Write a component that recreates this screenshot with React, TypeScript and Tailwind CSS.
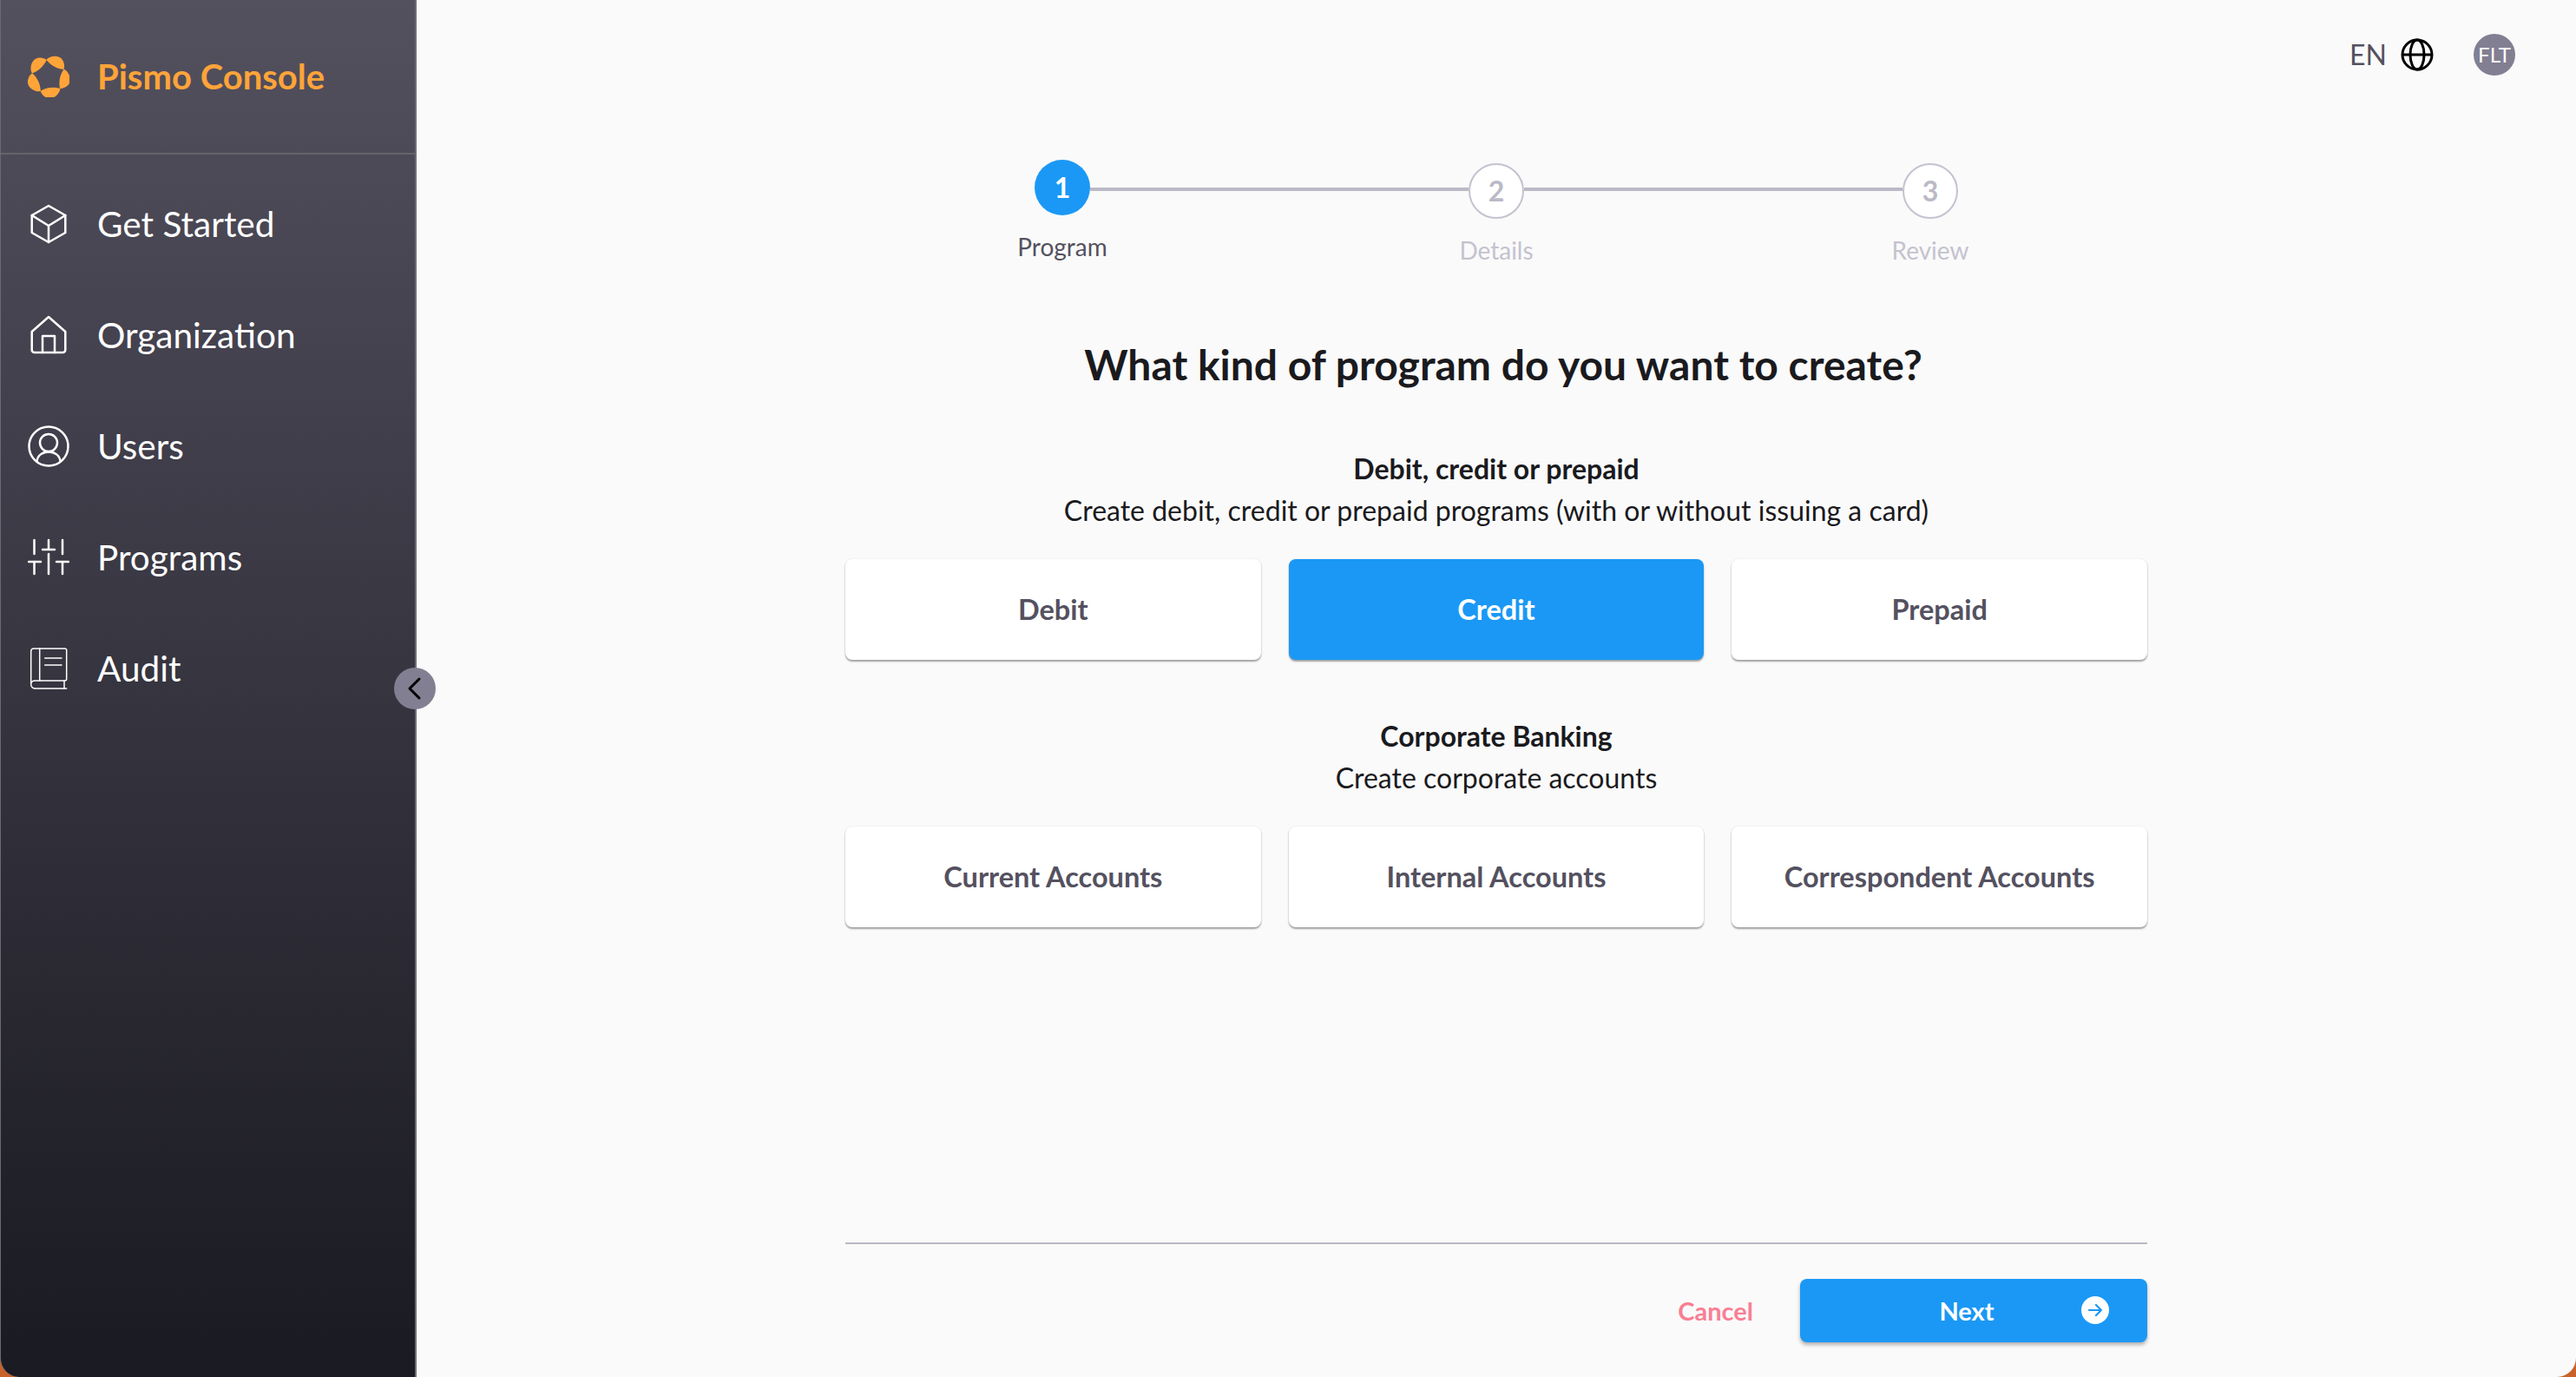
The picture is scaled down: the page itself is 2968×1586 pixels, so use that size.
const navItems = [
  { label: "Get Started", icon: <CubeIcon /> },
  { label: "Organization", icon: <HouseIcon /> },
  { label: "Users", icon: <UserIcon /> },
  { label: "Programs", icon: <SlidersIcon /> },
  { label: "Audit", icon: <BookIcon /> },
];

const steps = [
  { n: "1", label: "Program" },
  { n: "2", label: "Details" },
  { n: "3", label: "Review" },
];

function PismoLogo() {
  return (
    <svg width="48" height="48" viewBox="-24 -24 48 48" fill="#ffa439">
      {[0, 72, 144, 216, 288].map((deg) => (
        <path
          key={deg}
          transform={`rotate(${deg})`}
          d="M-2.7 -19.3C2 -24 12 -25 16 -19C18.5 -15 18.5 -11 17.3 -8C10 -9 3 -12 -2.7 -19.3Z"
        />
      ))}
    </svg>
  );
}

function CubeIcon() {
  return (
    <svg width="48" height="48" viewBox="0 0 48 48" fill="none" stroke="white" strokeWidth="2.5" strokeLinejoin="round" strokeLinecap="round">
      <path d="M24 3L43.3 14V34L24 45L4.7 34V14Z" />
      <path d="M4.7 14L24 26L43.3 14M24 26V45" />
    </svg>
  );
}

function HouseIcon() {
  return (
    <svg width="48" height="48" viewBox="0 0 48 48" fill="none" stroke="white" strokeWidth="2.5" strokeLinejoin="round" strokeLinecap="round">
      <path d="M4.7 20L24 3L43.3 20V41a3 3 0 0 1-3 3H7.7a3 3 0 0 1-3-3Z" />
      <path d="M17 44V25H31V44" />
    </svg>
  );
}

function UserIcon() {
  return (
    <svg width="48" height="48" viewBox="0 0 48 48" fill="none" stroke="white" strokeWidth="2.5" strokeLinecap="round">
      <circle cx="24" cy="24" r="22.5" />
      <circle cx="24" cy="20" r="10" />
      <path d="M10.5 41.5C11 34.5 17 30.5 24 30.5S37 34.5 37.5 41.5" />
    </svg>
  );
}

function SlidersIcon() {
  return (
    <svg width="48" height="48" viewBox="0 0 48 48" fill="none" stroke="white" strokeWidth="2.5" strokeLinecap="round">
      <path d="M7.5 4V20M1 29H15M7.5 29V43" />
      <path d="M24 4V15M17 15H31M24 20V43" />
      <path d="M40 4V20M33 29H47M40 29V43" />
    </svg>
  );
}

function BookIcon() {
  return (
    <svg width="48" height="48" viewBox="0 0 48 48" fill="none" stroke="white" strokeWidth="1.5" strokeLinecap="round" strokeLinejoin="round">
      <path d="M3.7 42V4a3 3 0 0 1 3-3H42.7a2 2 0 0 1 2 2V36a2 2 0 0 1-2 2H8a4.3 4.3 0 0 0-4.3 4.3a4.7 4.7 0 0 0 4.3 4.7H44.7" />
      <path d="M13.7 1V38M42 38V47" />
      <path d="M19.7 12H39M19.7 20H39" />
    </svg>
  );
}

function Sidebar() {
  return (
    <aside className="relative w-[480px] shrink-0 rounded-bl-[22px] border-l border-r-2 border-l-[#6b6975] border-r-[#6e6c7a] bg-gradient-to-b from-[#54515f] to-[#1a1a22]">
      {/* Logo */}
      <div className="flex h-[178px] items-center gap-[32px] border-b-2 border-[#64636a] pl-[31px]">
        <PismoLogo />
        <span className="text-[40px] font-bold text-[#ffa439]">Pismo Console</span>
      </div>

      {/* Nav */}
      <nav className="flex flex-col pt-4">
        {navItems.map((item) => (
          <a key={item.label} href="#" className="flex h-[128px] items-center gap-[32px] pl-[31px] text-[40.5px] text-white">
            {item.icon}
            {item.label}
          </a>
        ))}
      </nav>

      {/* Collapse */}
      <button className="absolute left-[453px] top-[769px] flex h-12 w-12 items-center justify-center rounded-full bg-[#827f92]">
        <svg width="24" height="28" viewBox="0 0 24 28" fill="none" stroke="black" strokeWidth="3" strokeLinecap="round" strokeLinejoin="round">
          <path d="M17 3L6 14L17 25" />
        </svg>
      </button>
    </aside>
  );
}

function Stepper() {
  return (
    <div className="mt-[58px]">
      <div className="flex items-start px-[218px]">
        {steps.map((s, i) => (
          <div key={s.n} className={i === 0 ? "flex shrink-0" : "flex flex-1"}>
            {i > 0 && <div className="mt-[32px] h-1 flex-1 bg-[#bbb9c6]" />}
            <div
              className={
                i === 0
                  ? "flex h-16 w-16 items-center justify-center rounded-full bg-[#1b98f5] text-[32px] font-bold text-white"
                  : "mt-1 flex h-16 w-16 shrink-0 items-center justify-center rounded-full border-2 border-[#c4c2cf] bg-white text-[32px] font-bold text-[#bbb9c6]"
              }
            >
              {s.n}
            </div>
          </div>
        ))}
      </div>
      <div className="mt-[13px] grid grid-cols-3 text-center text-[28px] leading-[38px]">
        {steps.map((s, i) => (
          <div key={s.n} className={i === 0 ? "text-[#54515f]" : "mt-1 text-[#c4c2cf]"}>
            {s.label}
          </div>
        ))}
      </div>
    </div>
  );
}

function OptionCard({ label, active }: { label: string; active?: boolean }) {
  return (
    <button
      className={
        active
          ? "h-[116px] rounded-lg bg-[#1b98f5] text-[32.5px] font-bold text-white shadow-[0_2px_2px_rgba(0,0,0,0.35),0_0_2px_rgba(0,0,0,0.1)]"
          : "h-[116px] rounded-lg bg-white text-[32.5px] font-bold text-[#54515f] shadow-[0_2px_2px_rgba(0,0,0,0.35),0_0_2px_rgba(0,0,0,0.1)]"
      }
    >
      {label}
    </button>
  );
}

function Section({ title, text, options, active }: { title: string; text: string; options: string[]; active?: string }) {
  return (
    <section>
      <div className="text-center text-[32px] leading-[48px] text-[#1a1a1e]">
        <div className="font-bold">{title}</div>
        <div>{text}</div>
      </div>
      <div className="mt-8 grid grid-cols-3 gap-8">
        {options.map((o) => (
          <OptionCard key={o} label={o} active={o === active} />
        ))}
      </div>
    </section>
  );
}

export default function App() {
  return (
    <div className="flex h-screen overflow-hidden bg-[#c9622a] font-['Lato',sans-serif]">
      <Sidebar />
      <main className="flex flex-1 flex-col rounded-br-[22px] bg-[#fafafa]">
        {/* Top bar */}
        <header className="flex h-[126px] shrink-0 items-center justify-end pr-[70px]">
          <span className="text-[32px] text-[#54515f]">EN</span>
          <svg className="ml-4" width="38" height="38" viewBox="0 0 38 38" fill="none" stroke="black" strokeWidth="3">
            <circle cx="19" cy="19" r="17" />
            <ellipse cx="19" cy="19" rx="8" ry="17" />
            <path d="M2 19H36" />
          </svg>
          <div className="ml-[46px] flex h-12 w-12 items-center justify-center rounded-full bg-[#827f92] text-[24px] text-white">FLT</div>
        </header>

        <div className="mx-auto flex w-[1500px] flex-1 flex-col">
          <Stepper />
          <h1 className="mt-[81px] pl-4 text-center text-[48px] font-bold leading-[64px] text-[#1a1a1e]">
            What kind of program do you want to create?
          </h1>
          <div className="mt-[64px]">
            <Section
              title="Debit, credit or prepaid"
              text="Create debit, credit or prepaid programs (with or without issuing a card)"
              options={["Debit", "Credit", "Prepaid"]}
              active="Credit"
            />
          </div>
          <div className="mt-[64px]">
            <Section
              title="Corporate Banking"
              text="Create corporate accounts"
              options={["Current Accounts", "Internal Accounts", "Correspondent Accounts"]}
            />
          </div>

          {/* Footer */}
          <footer className="mt-auto mb-10 border-t-2 border-[#bbb9c6] pt-10">
            <div className="flex items-center justify-end">
              <a href="#" className="text-[29px] font-bold text-[#f87f94]">Cancel</a>
              <button className="relative ml-[54px] h-[73px] w-[400px] rounded-lg bg-[#1b98f5] pr-4 text-[29px] font-bold text-white shadow-[0_3px_4px_rgba(0,0,0,0.3)]">
                Next
                <span className="absolute right-[44px] top-[20px] flex h-8 w-8 items-center justify-center rounded-full bg-white">
                  <svg width="20" height="20" viewBox="0 0 20 20" fill="none" stroke="#1b98f5" strokeWidth="2.2" strokeLinecap="round" strokeLinejoin="round">
                    <path d="M3 10H17M11 4L17 10L11 16" />
                  </svg>
                </span>
              </button>
            </div>
          </footer>
        </div>
      </main>
    </div>
  );
}
